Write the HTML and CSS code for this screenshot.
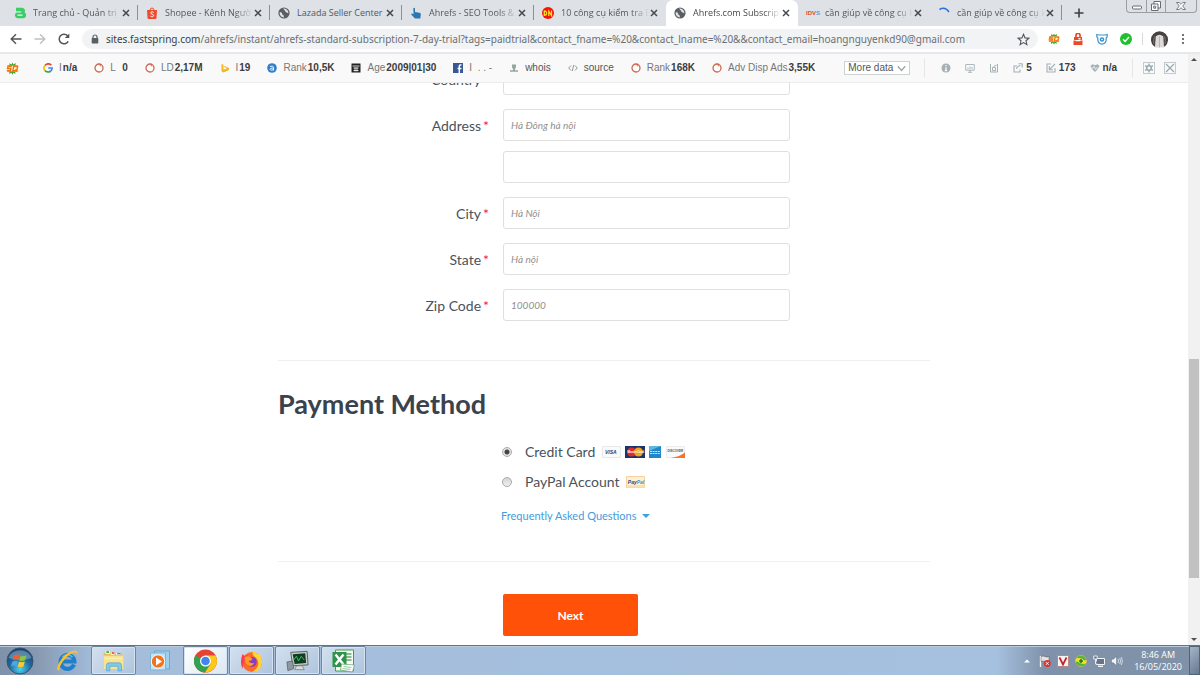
FILE: index.html
```html
<!DOCTYPE html>
<html lang="vi">
<head>
<meta charset="utf-8">
<title>Ahrefs.com Subscription</title>
<link rel="stylesheet" href="styles.css">
</head>
<body>
<svg class="defs" aria-hidden="true">
  <symbol id="close" viewBox="0 0 8 8"><path d="M1 1l6 6M7 1l-6 6" stroke="#45494d" stroke-width="1.500" fill="none"/></symbol>
  <symbol id="globe" viewBox="0 0 12 12"><circle cx="6" cy="6" r="5.600" fill="#5b5f64"/><path d="M1.600 5.400c1.800-.2 2.500.5 2.500 1.500s1.700.7 1.700 2v1.500C3.400 10.200 1.500 8.400 1.600 5.400zM5 1.600c1.300.5.600 1.500 1.600 1.700s.2 1.700 1.500 1.900 1.200 1 2.300.9C10.500 3.500 8.700 1.500 6.200 1.400z" fill="#dfe2e6"/></symbol>
  <symbol id="ring" viewBox="0 0 10 10"><circle cx="5" cy="5" r="4" fill="#fff" stroke="#cd6a51" stroke-width="1.300"/><path d="M5.500 1.200l1.300 2.200" stroke="#cd6a51"/></symbol>
  <symbol id="sq" viewBox="0 0 14 14"><path d="M7 .5l1 2.200 2.300-1.500v2.500l2.700-.3-1.300 2.200 1.500 1.600-1.700 1.200 1 2.300-2.500-.2v2.500L8 11.500 7 13.700l-1.200-2.200-2.300 1.400.1-2.500-2.600.2 1.300-2.200L.8 7l1.600-1.300-1.200-2.200 2.500.1V1.300l2.200 1.400z" fill="#4ba329"/><rect x=".5" y="4" width="13" height="6" rx="1" fill="#fff3d0"/><path d="M6.300 4.700H2.200L1.700 7H5.300L4.800 9.300H.9M8.300 4.700h4.200l-.9 4.600H7.400zM10 8l2.300 2.300" fill="none" stroke="#f5700f" stroke-width="1.500"/></symbol>
</svg>

<header class="tabstrip">
  <nav class="tabs">
    <div class="tab"><svg class="fav" viewBox="0 0 12 12"><path d="M2 .8h6a3 3 0 012.500 4.700A3 3 0 019 11.200H3.500a3 3 0 01-.8-5.700h4.500V4.200H2z" fill="#39cf66"/><path d="M3.500 7.500h5v1.300h-5z" fill="#e7f7ec"/></svg><span class="title">Trang chủ - Quản trị</span><button class="x" aria-label="Close tab"><svg><use href="#close"/></svg></button></div>
    <div class="tab"><svg class="fav" viewBox="0 0 12 12"><path d="M4 3.500a2 2.500 0 014 0" fill="none" stroke="#ee4d2d"/><path d="M1 3h10l-.5 8a1 1 0 01-1 1h-7a1 1 0 01-1-1z" fill="#ee4d2d"/><path d="M7.700 5.400C6.500 4.500 4.800 4.700 4.800 5.900c0 1.500 2.800 1 2.800 2.600 0 1.400-2 1.500-3.200.6" fill="none" stroke="#fff"/></svg><span class="title">Shopee - Kênh Ngườ</span><button class="x" aria-label="Close tab"><svg><use href="#close"/></svg></button></div>
    <div class="tab"><svg class="fav"><use href="#globe"/></svg><span class="title full">Lazada Seller Center</span><button class="x" aria-label="Close tab"><svg><use href="#close"/></svg></button></div>
    <div class="tab"><svg class="fav" viewBox="0 0 12 12"><path d="M3.300 1.200q1.200-.9 1.700.3V5l4.500.7q1.500.3 1.300 1.800L10.300 11.500H5L1.200 7.500q0-1.300 1.500-.8l.9.600z" fill="#2c76b1"/></svg><span class="title">Ahrefs - SEO Tools &amp;</span><button class="x" aria-label="Close tab"><svg><use href="#close"/></svg></button></div>
    <div class="tab last"><svg class="fav" viewBox="0 0 12 12"><circle cx="6" cy="6" r="6" fill="#f5130b"/><path d="M2.300 3.500v4.800c3 .3 3.200-4.500 0-4.300M6.800 9V4.200L9.500 8.500V3.600" fill="none" stroke="#ffdc1f" stroke-width="1.300"/></svg><span class="title">10 công cụ kiểm tra B</span><button class="x" aria-label="Close tab"><svg><use href="#close"/></svg></button></div>
    <div class="tab active"><svg class="fav"><use href="#globe"/></svg><span class="title">Ahrefs.com Subscript</span><button class="x" aria-label="Close tab"><svg><use href="#close"/></svg></button></div>
    <div class="tab last"><span class="fav idvs"><b>IDV</b><i>S</i></span><span class="title">cần giúp về công cụ k</span><button class="x" aria-label="Close tab"><svg><use href="#close"/></svg></button></div>
    <div class="tab"><svg class="fav" viewBox="0 0 12 12"><path d="M1.500 2.500Q7-1 11 5" fill="none" stroke="#2a72e0" stroke-width="1.500"/></svg><span class="title">cần giúp về công cụ k</span><button class="x" aria-label="Close tab"><svg><use href="#close"/></svg></button></div>
  </nav>
  <button class="newtab" aria-label="New tab"><svg viewBox="0 0 10 10"><path d="M5 .5v9M.5 5h9" stroke="#3c4043" stroke-width="1.600"/></svg></button>
  <div class="winctl">
    <button aria-label="Minimize"><svg viewBox="0 0 12 12"><rect x="1.500" y="6" width="9" height="3" rx="1" fill="#fff" stroke="#666c73"/></svg></button>
    <button aria-label="Restore"><svg viewBox="0 0 12 12"><path d="M4 1.500h6.500V8H4z" fill="#fff" stroke="#666c73"/><path d="M1.500 4H8v6.500H1.500z" fill="#fff" stroke="#666c73"/><path d="M3.700 6.200h2v2h-2z" fill="none" stroke="#666c73"/></svg></button>
    <button class="wide" aria-label="Close"><svg viewBox="0 0 12 12"><path d="M1.500 2.500h2.700L6 4.300l1.800-1.800h2.700L7.700 6l2.800 3.500H7.800L6 7.700 4.200 9.500H1.500L4.300 6z" fill="#fff" stroke="#6d737a" stroke-width=".9"/></svg></button>
  </div>
</header>

<div class="toolbar">
  <button aria-label="Back"><svg viewBox="0 0 12 12"><path d="M11.500 6H1.500M6 1.200L1.200 6 6 10.800" fill="none" stroke="#505458" stroke-width="1.400"/></svg></button>
  <button aria-label="Forward"><svg viewBox="0 0 12 12"><path d="M.5 6h10M6 1.200L10.800 6 6 10.800" fill="none" stroke="#bdc0c4" stroke-width="1.400"/></svg></button>
  <button aria-label="Reload"><svg viewBox="0 0 12 12"><path d="M10.200 8.300A4.800 4.800 0 119.600 2.800" fill="none" stroke="#505458" stroke-width="1.500"/><path d="M11.300.5v4.500H6.800z" fill="#505458"/></svg></button>
  <div class="omnibox">
    <svg class="lock" viewBox="0 0 8 10"><path d="M2 4.500V3a2 2 0 014 0v1.500" fill="none" stroke="#5a5e62" stroke-width="1.200"/><rect x=".7" y="4" width="6.600" height="5.500" rx=".7" fill="#5a5e62"/></svg>
    <span class="url"><b>sites.fastspring.com</b>/ahrefs/instant/ahrefs-standard-subscription-7-day-trial?tags=paidtrial&amp;contact_fname=%20&amp;contact_lname=%20&amp;&amp;contact_email=hoangnguyenkd90@gmail.com</span>
    <button class="star" aria-label="Bookmark"><svg viewBox="0 0 12 12"><path d="M6 1.200l1.400 3.300 3.600.3-2.700 2.400.8 3.500L6 8.800l-3.100 1.900.8-3.500L1 4.800l3.600-.3z" fill="none" stroke="#505458"/></svg></button>
  </div>
  <div class="exts">
    <svg><use href="#sq"/></svg>
    <svg viewBox="0 0 12 12"><path d="M4 4.500V2a2 1.500 0 014 0v2.500" fill="none" stroke="#ea4a26" stroke-width="1.700"/><path d="M2 4h8v3H2zM1.500 7.500h9v4.500h-9z" fill="#ea4a26"/><path d="M3.500 7h5v1.200h-5zM6.500 5h2v1.500h-2z" fill="#fff"/></svg>
    <svg viewBox="0 0 12 12"><path d="M.8 1.500l2 .5h6.400l2-.5v2.300l-1 1v2.400Q9.500 11 6 11.200 2.500 11 1.800 7.200V4.800l-1-1z" fill="#fff" stroke="#3b95cf" stroke-width="1.200"/><circle cx="6" cy="6.500" r="2.300" fill="#3b95cf"/><circle cx="6" cy="6.500" r=".8" fill="#fff"/></svg>
    <svg viewBox="0 0 12 12"><circle cx="6" cy="6" r="6" fill="#1fc02b"/><path d="M3 6.200l2.100 2.200L9 4" fill="none" stroke="#fff" stroke-width="1.500"/></svg>
  </div>
  <span class="avatar"><svg viewBox="0 0 16 16"><path d="M3 14.500A8 8 0 1113 14.500z" fill="#45413f"/><path d="M4.500 5q3.500-3 7 0l.8 10.500H3.700z" fill="#dddbd8"/><path d="M8 5v10.500" stroke="#a29d98" stroke-width=".6"/><path d="M3.500 5q-1.500 3-.8 7M12.500 5q1.500 3 .8 7" stroke="#8a8580" fill="none" stroke-width=".7"/></svg></span>
  <button class="menu" aria-label="Menu"><svg viewBox="0 0 4 12"><circle cx="2" cy="2" r="1.100"/><circle cx="2" cy="6" r="1.100"/><circle cx="2" cy="10" r="1.100"/></svg></button>
</div>

<div class="window">
  <div class="view">
    <div class="seobar">
      <svg class="logo"><use href="#sq"/></svg>
      <div class="metrics">
        <span class="m"><svg viewBox="0 0 10 10"><path d="M8.300 2.200A4 4 0 002 2.500" fill="none" stroke="#ea4335" stroke-width="1.700"/><path d="M1.900 2.500a4 4 0 000 5" fill="none" stroke="#fbbc05" stroke-width="1.700"/><path d="M1.900 7.400a4 4 0 005.800.6" fill="none" stroke="#34a853" stroke-width="1.700"/><path d="M5.200 5h3.900q0 2-1.500 3.200" fill="none" stroke="#4285f4" stroke-width="1.700"/></svg><span>I<b>n/a</b></span></span>
        <span class="m"><svg><use href="#ring"/></svg><span>L&nbsp; <b>0</b></span></span>
        <span class="m"><svg><use href="#ring"/></svg><span>LD<b>2,17M</b></span></span>
        <span class="m"><svg viewBox="0 0 10 10"><path d="M1.500 1l2 .7v5L7 5.200 4.500 4l-.6-1.300L9 5v2L3.500 9.500l-2-1.200z" fill="#f6b51d"/></svg><span>I<b>19</b></span></span>
        <span class="m"><svg viewBox="0 0 10 10"><circle cx="5" cy="5" r="4.800" fill="#2d80c9"/><path d="M3 3.500q3.500-1.300 3.500 1V7.500M6.500 5Q3 4.800 3 6.300t3.500.5" fill="none" stroke="#fff" stroke-width=".9"/></svg><span>Rank<b>10,5K</b></span></span>
        <span class="m"><svg viewBox="0 0 10 10"><path d="M.5.500h9v9h-9z" fill="#222"/><path d="M1.500 3h7M2.500 5h5M2.500 7.500h5M4 4.500v4M6 4.500v4" stroke="#fff" stroke-width=".8"/></svg><span>Age<b>2009|01|30</b></span></span>
        <span class="m"><svg viewBox="0 0 10 10"><path d="M0 0h10v10H0z" fill="#3a5795"/><path d="M8.500 2Q6.300 1.600 6.300 3.300V10M4.500 5.400h4" fill="none" stroke="#fff" stroke-width="1.500"/></svg><span>I&nbsp; . . -</span></span>
        <span class="m"><svg viewBox="0 0 10 10"><path d="M3 1.500h4v3L6 6v1.200h3v1.600H1V7.200h3V6L3 4.500z" fill="#92a8a0"/></svg><span class="dark">whois</span></span>
        <span class="m"><svg viewBox="0 0 10 10"><path d="M3 2.500L.7 5 3 7.500M7 2.500L9.300 5 7 7.500M5.700 2L4.300 8" fill="none" stroke="#8b9a97"/></svg><span class="dark">source</span></span>
        <span class="m"><svg><use href="#ring"/></svg><span>Rank<b>168K</b></span></span>
        <span class="m"><svg><use href="#ring"/></svg><span>Adv Disp Ads<b>3,55K</b></span></span>
      </div>
      <button class="more">More data<svg viewBox="0 0 8 6"><path d="M.7 1L4 4.800 7.300 1" fill="none" stroke="#9aa8a9" stroke-width="1.200"/></svg></button>
      <div class="side">
        <span class="m"><svg viewBox="0 0 10 10"><circle cx="5" cy="5" r="4.500" fill="#a5b1b5"/><path d="M5 2v1.300M5 4.200v3.600M3.800 7.600h2.400" stroke="#fff" stroke-width="1.200"/></svg></span>
        <span class="m"><svg viewBox="0 0 10 10"><path d="M.7 1.500h8.600v5.700H.7zM5 7v2.500M3 9.300h4M3 6V4.500M5 6V3.500M7 6V4" fill="none" stroke="#a5b1b5" stroke-width=".9"/></svg></span>
        <span class="m"><svg viewBox="0 0 10 10"><path d="M1.500 1v8h7V1M3.500 4.500h3v3h-3zM4.500 3.500l3-1.500" fill="none" stroke="#a5b1b5"/></svg></span>
        <span class="m"><svg viewBox="0 0 10 10"><path d="M4 3H1v6h6V6.500M3.500 6Q3.700 3.500 7.500 2.500M5.500.8h3.700v3.700" fill="none" stroke="#a5b1b5" stroke-width="1.100"/></svg><b>5</b></span>
        <span class="m"><svg viewBox="0 0 10 10"><path d="M5 1H1v8h8V5M9 1L3.500 6.500M3.300 3v3.700H7" fill="none" stroke="#a5b1b5" stroke-width="1.100"/></svg><b>173</b></span>
        <span class="m"><svg viewBox="0 0 10 10"><path d="M5 9L.8 4.700Q0 2.500 2 1.500q2-.5 3 1 1-1.500 3-1 2 1 1.200 3.200z" fill="#a5b1b5"/><path d="M0 5h3l1-1.500L5.500 6.500 6.500 5H10" fill="none" stroke="#f9f9f9" stroke-width=".8"/></svg><b>n/a</b></span>
      </div>
      <div class="tools">
        <button aria-label="Settings"><svg viewBox="0 0 10 10"><circle cx="5" cy="5" r="2.300" fill="none" stroke="#9aacb0" stroke-width="1.600"/><path d="M5 .5v2M5 7.500v2M1.100 2.700l1.700 1M7.200 6.300l1.700 1M1.100 7.300l1.700-1M7.200 3.700l1.700-1" stroke="#9aacb0" stroke-width="1.500"/></svg></button>
        <button aria-label="Close bar"><svg viewBox="0 0 10 10"><path d="M1 1l8 8M9 1L1 9" stroke="#9aacb0" stroke-width="1.300"/></svg></button>
      </div>
    </div>

    <main class="page">
      <form class="checkout">
        <div class="fields">
          <label for="country"><span>Country</span><em>*</em></label><input id="country" type="text">
          <label for="addr"><span>Address</span><em>*</em></label>
          <div class="stack"><input id="addr" type="text" placeholder="Hà Đông hà nội"><input type="text" aria-label="Address line 2"></div>
          <label for="city"><span>City</span><em>*</em></label><input id="city" type="text" placeholder="Hà Nội">
          <label for="state"><span>State</span><em>*</em></label><input id="state" type="text" placeholder="Hà nội">
          <label for="zip"><span>Zip Code</span><em>*</em></label><input id="zip" type="text" placeholder="100000">
        </div>
        <section class="payment">
          <h2>Payment Method</h2>
          <div class="options">
            <div class="opt"><input type="radio" name="pay" id="cc" checked><label for="cc">Credit Card</label>
              <svg class="cards" viewBox="0 0 83 13"><path d="M.5.500h18v11H.5z" fill="#fafafa" stroke="#e9e9e9"/><text x="3" y="8" font-size="5" font-weight="700" font-style="italic" fill="#253f7d">VISA</text><path d="M23 0h20v12H23z" fill="#18356f"/><circle cx="29.500" cy="6" r="4.500" fill="#e52b25"/><circle cx="36.500" cy="6" r="4.500" fill="#f5a21c"/><text x="25.500" y="7.300" font-size="3" font-weight="700" fill="#fff">MasterCard</text><path d="M47 0h12v12H47z" fill="#2187c8"/><path d="M47 0h12L47 5z" fill="#62b5de"/><path d="M48 5.500h10M48 7.500h10" stroke="#d7edf7" stroke-width=".9" stroke-dasharray="2 .6"/><path d="M64.500.500h18v11h-18z" fill="#fafafa" stroke="#ececec"/><path d="M83 6.500V12H69q9-1.500 14-5.500z" fill="#f4752b"/><text x="65.500" y="6.300" font-size="3" font-weight="700" fill="#555">DISCOVER</text></svg></div>
            <div class="opt"><input type="radio" name="pay" id="pp"><label for="pp">PayPal Account</label>
              <svg class="paypal" viewBox="0 0 20 13"><path d="M.5.500h18v11H.5z" fill="#fff0d2" stroke="#f5d2a0"/><path d="M1 9h17v2.500H1z" fill="#fde0ae"/><text x="1.800" y="7.700" font-size="5" font-weight="700" font-style="italic" fill="#24477f">Pay<tspan fill="#3d95cf">Pal</tspan></text></svg></div>
          </div>
          <a class="faq" href="#">Frequently Asked Questions<i></i></a>
        </section>
        <div class="actions"><button class="next" type="submit">Next</button></div>
      </form>
    </main>
  </div>
  <div class="scrollbar"><i class="up"></i><div class="track"><div class="thumb"></div></div><i class="down"></i></div>
</div>

<footer class="taskbar">
  <button class="orb" aria-label="Start"><svg viewBox="0 0 28 28"><defs><radialGradient id="o" cx=".5" cy=".8" r=".8"><stop offset="0" stop-color="#4ed2f2"/><stop offset=".5" stop-color="#216a9e"/><stop offset="1" stop-color="#1b4064"/></radialGradient></defs><circle cx="14" cy="14" r="13" fill="url(#o)" stroke="#365372"/><path d="M2.500 11a12 11 0 0123 0Q14 15 2.500 11z" fill="#b5d0e2" opacity=".4"/><path d="M8 8.500q3-1.700 5.500-.3L12.300 13q-2.600-1.200-5.600.2z" fill="#f0602a"/><path d="M14.600 8.700q2.700 1.200 5.800-.3L19 13.300q-3 1.400-5.600.1z" fill="#8dc63f"/><path d="M6.400 14.500q3-1.500 5.500-.2l-1.300 4.900q-2.600-1.300-5.600.2z" fill="#49a8e8"/><path d="M13 14.800q2.800 1.100 5.800-.3l-1.400 4.900q-3 1.500-5.700.2z" fill="#fdc92c"/></svg></button>
  <button class="task" aria-label="Internet Explorer"><svg viewBox="0 0 24 24"><path d="M18.500 15.500A7 7 0 1119 12.500H6" fill="none" stroke="#1f7fcd" stroke-width="4"/><path d="M17 8A6.500 6.500 0 007 8" fill="none" stroke="#5ebdf0" stroke-width="1.500"/><path d="M5 21Q-1 23 3.500 14 10 2.500 19 1.500q4.500 0 2.500 5.500.5-4-2.500-3.500-6 .8-12 9.500-4.500 7-2 8z" fill="#f9c22d"/></svg></button>
  <button class="task on" aria-label="Explorer"><svg viewBox="0 0 28 24"><path d="M3 4l2-2h6l2 2h11v17H3z" fill="#e7bd52"/><path d="M5 1h5v3H5zM11 2h4v3h-4zM17 3h5v2h-5z" fill="#fff"/><path d="M6 1h3v2H6z" fill="#36a852"/><path d="M12 2h3v2h-3z" fill="#e35442"/><path d="M18 3h4v1.500h-4z" fill="#4891d8"/><path d="M3 6h22v15H3z" fill="#f8e390"/><path d="M4 9h20" stroke="#fff4bd"/><path d="M6 23v-6q0-3 3-3h11q3 0 3 3v6h-4v-5h-9v5z" fill="#7ec9ec" stroke="#4c9fce" stroke-width=".7"/></svg></button>
  <button class="task" aria-label="Media Player"><svg viewBox="0 0 24 24"><path d="M7 2h15v18H7z" fill="#9ed0ee" stroke="#6aaad1"/><path d="M3 4h15v17H3z" fill="#c3e2f4" stroke="#78b5d9"/><circle cx="10.500" cy="12.500" r="6.700" fill="#ef741d" stroke="#fff"/><path d="M8.500 8.500l6 4-6 4z" fill="#fff"/></svg></button>
  <button class="task on bright" aria-label="Chrome"><svg viewBox="0 0 24 24"><circle cx="12" cy="12" r="11.500" fill="#e54435"/><path d="M2 6.200A11.500 11.500 0 0011.500 23.500L17 14.900 12 12z" fill="#31a350"/><path d="M22 6.500H12l5 8.400-5.500 8.600A11.500 11.500 0 0022 6.500z" fill="#fbc918"/><circle cx="12" cy="12" r="5.500" fill="#fff"/><circle cx="12" cy="12" r="4.300" fill="#4384ef"/></svg></button>
  <button class="task on" aria-label="Firefox"><svg viewBox="0 0 24 24"><circle cx="12.500" cy="13" r="10" fill="#ff6a28"/><path d="M14 1q2 3 4 4l1-1q5 6 3 12-2 7-9.500 7Q21 18 18 11q-1-3-4-4-2-3 0-6z" fill="#ffd43b"/><path d="M3 5l2 2 3-1 1 3-5 4-1 7Q0 13 3 5z" fill="#ff3a50"/><path d="M8 9q7-3 9 2 1 7-5 7-6-1-5-6l4-1z" fill="#873fc1"/><path d="M5 8q5-2 8 2-1 2-4 2 2 3 6 2-3 5-7 2-3-2-3-8z" fill="#ff9a27"/></svg></button>
  <button class="task on" aria-label="Monitor"><svg viewBox="0 0 26 24"><path d="M6 3l17-1 1 14-16 1z" fill="#c9ccc7" stroke="#53615f"/><path d="M8 5l13-1 1 10-12 1z" fill="#103b25"/><path d="M9 11l3-4 2 5 3-5 3 4" fill="none" stroke="#35c653"/><path d="M12 17h6l2 4H10z" fill="#d8dbd7" stroke="#69716e" stroke-width=".7"/><path d="M2 13l6-1 1 8-6 2z" fill="#8f98a0" stroke="#4d5660" stroke-width=".7"/></svg></button>
  <button class="task on" aria-label="Excel"><svg viewBox="0 0 24 24"><path d="M4 1h18v21H4z" fill="#f5faf5" stroke="#439a53"/><path d="M13 5h7M13 8h7M13 11h7" stroke="#88bd8f" stroke-width="2"/><path d="M1 3h14v15H1z" fill="#2f934a"/><path d="M4 5.500l8 10M12 5.500l-8 10" stroke="#fff" stroke-width="2.400"/><path d="M10 15l13 1-2 7-12-2z" fill="#fff" stroke="#5aa067" stroke-width=".7"/><path d="M12 17.500l8 1M11 19.500l8 1" stroke="#77b681" stroke-width=".8"/></svg></button>
  <div class="tray">
    <svg viewBox="0 0 12 12"><path d="M3 7.500h6L6 4.500z" fill="#fff"/></svg>
    <svg viewBox="0 0 12 12"><path d="M1.500 1v11" stroke="#fff" stroke-width="1.300"/><path d="M2 1.500q2-1 4 0t4 0v5q-2 1-4 0t-4 0z" fill="#dfe5ec" stroke="#555" stroke-width=".5"/><circle cx="8.300" cy="8.500" r="3.400" fill="#df3228"/><path d="M7 7.200l2.600 2.600M9.600 7.200L7 9.800" stroke="#fff"/></svg>
    <svg viewBox="0 0 12 12"><path d="M.5.500h11v11H.5z" fill="#f7f3f3" stroke="#b88"/><path d="M2.500 2.500L6 9.500l3.500-7" fill="none" stroke="#c0242c" stroke-width="1.700"/></svg>
    <svg viewBox="0 0 12 12"><circle cx="6" cy="6" r="5.700" fill="#f6e02a"/><path d="M1 3.500A5.700 5.700 0 0111.500 5L9.500 5.500Q5.500 2 1 3.500zM11 8.500A5.700 5.700 0 01.5 7l2-.5Q6.500 10 11 8.500z" fill="#5ab53f"/><path d="M6 4v4M4 6h4" stroke="#25742a" stroke-width="1.500"/></svg>
    <svg viewBox="0 0 12 12"><path d="M3.500 3.500h8v6h-8z" fill="#63758c" stroke="#f2f5f8"/><path d="M5 11.300h5" stroke="#fff" stroke-width="1.200"/><path d="M.7 1h3.500v3H.7zM2.500 4v5h2" fill="#63758c" stroke="#e6ebf0"/></svg>
    <svg viewBox="0 0 12 12"><path d="M.5 4.200h2L5.500 1.200v9.600l-3-3h-2z" fill="#f2f5f8" stroke="#4f5f73" stroke-width=".4"/><path d="M7 4q1 2 0 4M8.700 3q1.800 3 0 6M10.300 2q2.300 4 0 8" fill="none" stroke="#e6ecf2" stroke-width=".8"/></svg>
  </div>
  <div class="clock"><span>8:46 AM</span><span>16/05/2020</span></div>
  <button class="desk" aria-label="Show desktop"></button>
</footer>
</body>
</html>
```
FILE: styles.css
```css
* { box-sizing: border-box; }
body {
  margin: 0;
  height: 100vh;
  display: flex;
  flex-direction: column;
  overflow: hidden;
  background: #fff;
  font-family: Lato, "Liberation Sans", sans-serif;
}
button {
  border: 0;
  padding: 0;
  background: none;
  font: inherit;
  color: inherit;
  display: flex;
  align-items: center;
  justify-content: center;
}
svg { display: block; flex: none; }
.defs { position: absolute; width: 0; height: 0; }

/* tab strip */
.tabstrip {
  flex: none;
  height: 26px;
  display: flex;
  background: #dee1e6;
  padding-left: 6px;
  font: 9px/14px "Open Sans", "Noto Sans", sans-serif;
  color: #54585d;
}
.tabs { display: flex; flex: 0 1 1056px; min-width: 0; }
.tab {
  flex: 1 1 0;
  min-width: 0;
  display: flex;
  align-items: center;
  padding: 0 8px;
  background: linear-gradient(#8b8f94, #8b8f94) right 5px / 1px 15px no-repeat;
}
.tab.last { background: none; }
.tab.active { background: #fff; border-radius: 7px 7px 0 0; color: #45494d; }
.fav { width: 12px; height: 12px; flex: none; }
.title {
  flex: 1;
  min-width: 0;
  margin: 0 1px 0 7px;
  overflow: hidden;
  white-space: nowrap;
  mask-image: linear-gradient(90deg, #000 80%, transparent);
}
.title.full { mask-image: none; }
.x svg { width: 8px; height: 8px; }
.idvs {
  display: flex;
  align-items: center;
  font: 700 6px/12px "Liberation Sans", sans-serif;
  color: #e6492d;
}
.idvs i { color: #3aa7d4; font-style: normal; }
.newtab { width: 33px; }
.newtab svg { width: 10px; height: 10px; }
.winctl {
  display: flex;
  height: 13px;
  margin: 0 3px 0 auto;
  border: 1px solid #9a9fa6;
  border-top: 0;
  border-radius: 0 0 4px 4px;
}
.winctl button { width: 19px; }
.winctl button + button { border-left: 1px solid #9a9fa6; }
.winctl .wide { width: 31px; }
.winctl svg { width: 12px; height: 12px; }

/* address row */
.toolbar {
  flex: none;
  height: 28px;
  display: flex;
  align-items: center;
  padding: 0 12px 0 10px;
  border-bottom: 2px solid #e6e8eb;
}
.toolbar > button svg { width: 12px; height: 12px; }
.toolbar > button { width: 12px; margin-right: 12px; }
.omnibox {
  flex: 1;
  min-width: 0;
  height: 20px;
  display: flex;
  align-items: center;
  padding: 0 8px 0 9px;
  border-radius: 10px;
  background: #f1f3f4;
}
.lock { width: 8px; height: 10px; }
.url {
  flex: 1;
  min-width: 0;
  margin-left: 7px;
  overflow: hidden;
  white-space: nowrap;
  font: 10px/16px "Noto Sans", "Open Sans", sans-serif;
  color: #6b6f74;
}
.url b { font-weight: 400; color: #3c4043; }
.star svg { width: 13px; height: 13px; }
.exts {
  display: flex;
  gap: 12px;
  padding: 0 10px 0 10px;
  border-right: 1px solid #d5d8dc;
}
.exts svg { width: 12px; height: 12px; }
.avatar { padding: 0 13px 0 8px; }
.avatar svg { width: 17px; height: 17px; }
.toolbar > .menu { width: 4px; margin: 0 3px 0 0; }
.toolbar > .menu svg { width: 4px; fill: #505458; }

/* window body */
.window { flex: 1; min-height: 0; display: flex; }
.view { flex: 1; min-width: 0; display: flex; flex-direction: column; }
.seobar {
  flex: none;
  height: 29px;
  display: flex;
  align-items: center;
  padding: 0 12px 0 6px;
  background: #f9f9f9;
  border-bottom: 1px solid #ebebeb;
  font: 10px/14px "Liberation Sans", Arial, sans-serif;
  color: #777;
  white-space: nowrap;
}
.seobar b { margin-left: 1px; color: #3c3c3c; }
.seobar .dark { color: #555; }
.logo { width: 13px; height: 13px; }
.metrics { display: flex; gap: 17px; margin-left: 24px; }
.m { display: flex; align-items: center; gap: 6px; }
.m svg { width: 10px; height: 10px; }
.more {
  height: 14px;
  gap: 4px;
  margin-left: auto;
  padding: 0 3px;
  border: 1px solid #ccd2d2;
  background: #fff;
  color: #555;
}
.more svg { width: 9px; height: 7px; }
.side {
  display: flex;
  gap: 14px;
  height: 20px;
  margin-left: 14px;
  padding: 0 15px 0 16px;
  border-left: 1px solid #e6e6e6;
  border-right: 1px solid #e6e6e6;
}
.side .m { gap: 2px; }
.tools { display: flex; gap: 9px; margin-left: 10px; }
.tools button { width: 12px; height: 12px; border: 1px solid #c2cccf; }
.tools svg { width: 10px; height: 10px; }

/* checkout page */
.page { flex: 1; min-height: 0; overflow: hidden; }
.checkout {
  max-width: 672px;
  margin: -20px auto 0;
  padding-left: 20px;
  color: #4a525b;
}
.fields {
  display: grid;
  grid-template-columns: 211px 287px;
  column-gap: 14px;
  row-gap: 14px;
  padding-bottom: 39px;
  border-bottom: 1px solid #f0f0f0;
}
.fields label {
  display: flex;
  justify-content: flex-end;
  gap: 2px;
  padding-top: 8px;
  font-size: 14px;
  line-height: 18px;
}
.fields em { color: #f5203a; font-style: normal; }
.fields input {
  display: block;
  width: 100%;
  height: 32px;
  padding: 0 7px;
  border: 1px solid #dfdfdf;
  border-radius: 3px;
  background: #fff;
  font: italic 10px Lato, sans-serif;
}
.fields input::placeholder { color: #909090; }
.stack { display: grid; gap: 10px; }
.payment { padding-bottom: 37px; border-bottom: 1px solid #f0f0f0; }
h2 {
  margin: 0;
  padding: 25px 0 20px;
  font-size: 27px;
  line-height: 36px;
  font-weight: 700;
  color: #3a424d;
}
.options { display: grid; gap: 10px; padding-left: 224px; }
.opt { display: flex; align-items: center; font-size: 14px; line-height: 20px; }
.opt input {
  appearance: none;
  width: 10px;
  height: 10px;
  margin: 0 13px 0 0;
  border: 1px solid #aaa;
  border-radius: 50%;
  background: linear-gradient(#d4d4d4, #f0f0f0);
}
.opt input:checked { background: radial-gradient(circle, #444 0 2px, #e4e4e4 3px); }
.opt svg { margin-left: 7px; font-family: "Liberation Sans", sans-serif; }
.cards { width: 83px; height: 13px; }
.paypal { width: 20px; height: 13px; }
.faq {
  display: inline-flex;
  align-items: center;
  gap: 5px;
  margin: 16px 0 0 223px;
  font-size: 11px;
  line-height: 16px;
  color: #469bdc;
  text-decoration: none;
}
.faq i { border: 4px solid transparent; border-top-color: #3da0df; border-bottom: 0; }
.actions { padding: 32px 0 0 225px; }
.next {
  width: 135px;
  height: 42px;
  border-radius: 2px;
  background: #ff5108;
  color: #fff;
  font-size: 12px;
  font-weight: 700;
}

/* scroll bar */
.scrollbar {
  width: 12px;
  display: flex;
  flex-direction: column;
  align-items: center;
  padding: 4px 0;
  background: #f1f1f1;
}
.scrollbar i { border: 3px solid transparent; }
.scrollbar .up { border-bottom-color: #505050; border-top: 0; }
.scrollbar .down { border-top-color: #505050; border-bottom: 0; }
.track { flex: 1; width: 10px; display: flex; flex-direction: column; justify-content: flex-end; }
.thumb { height: 38%; margin-bottom: 60px; background: #c1c1c1; }

/* taskbar */
.taskbar {
  flex: none;
  height: 30px;
  display: flex;
  align-items: stretch;
  gap: 1px;
  border-top: 1px solid #5e738c;
  background: linear-gradient(90deg, #8092a9, #8799b1 3%, #a3bddb 8%, #a6c1df 83%, #8092ab 87%, #8092a8);
  box-shadow: inset 0 1px #b9cbdf;
}
.orb { width: 44px; padding-right: 4px; }
.orb svg { width: 28px; height: 28px; }
.task { width: 45px; border-radius: 2px; }
.task svg { width: 25px; height: 24px; }
.task.on {
  border: 1px solid #70869f;
  background: linear-gradient(135deg, #d3e0ee, #aec4dd);
  box-shadow: inset 0 0 0 1px #d6e2ef;
}
.task.bright { background: linear-gradient(135deg, #fff, #dbe7f3); }
.tray { display: flex; align-items: center; gap: 6px; margin-left: auto; }
.tray svg { width: 12px; height: 12px; }
.clock {
  display: flex;
  flex-direction: column;
  justify-content: center;
  align-items: center;
  margin: 0 6px 0 10px;
  font: 9px/12px "Open Sans", "Noto Sans", sans-serif;
  color: #fff;
}
.desk {
  width: 11px;
  border: 1px solid #52647b;
  background: linear-gradient(135deg, #a6b4c6, #667991);
}
```
